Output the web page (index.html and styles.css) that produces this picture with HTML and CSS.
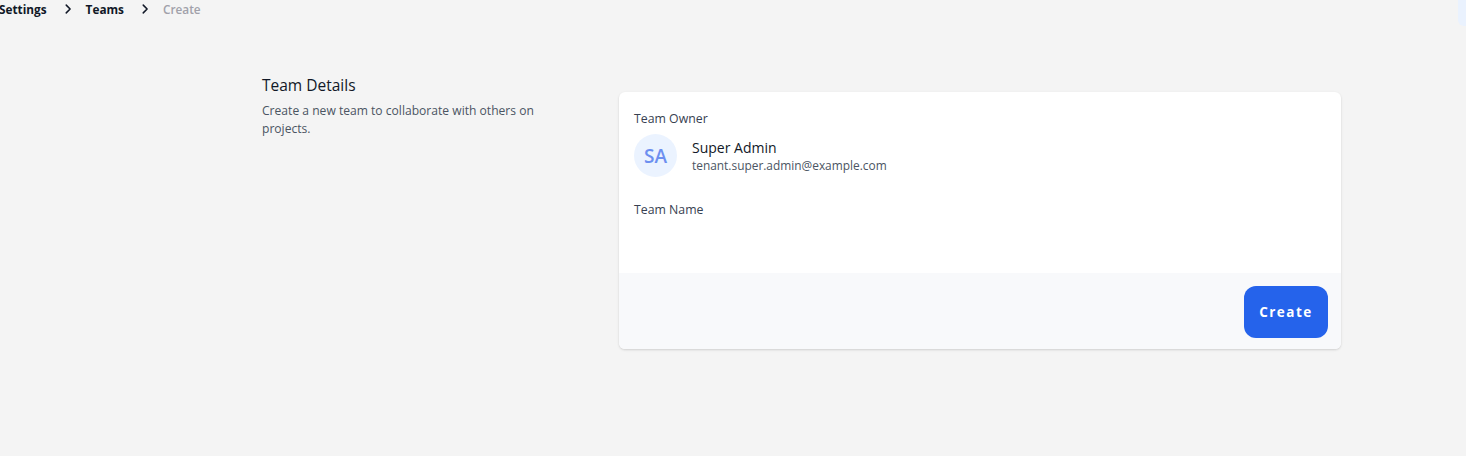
FILE: index.html
```html
<!DOCTYPE html>
<html lang="en">
<head>
<meta charset="utf-8">
<title>Create Team</title>
<link rel="stylesheet" href="styles.css">
</head>
<body>
<nav class="crumbs">
  <span class="crumb">Settings</span>
  <svg class="chev" viewBox="0 0 20 20" width="14" height="14"><path d="M7.5 4.5l5.5 5.5-5.5 5.5" fill="none" stroke="#111827" stroke-width="2.2" stroke-linecap="round" stroke-linejoin="round"/></svg>
  <span class="crumb">Teams</span>
  <svg class="chev" viewBox="0 0 20 20" width="14" height="14"><path d="M7.5 4.5l5.5 5.5-5.5 5.5" fill="none" stroke="#111827" stroke-width="2.2" stroke-linecap="round" stroke-linejoin="round"/></svg>
  <span class="crumb current">Create</span>
</nav>
<div class="corner-tab"></div>
<main class="section">
  <div class="intro">
    <h2 class="intro-title">Team Details</h2>
    <p class="intro-desc">Create a new team to collaborate with others on projects.</p>
  </div>
  <div class="card">
    <div class="card-body">
      <div class="label">Team Owner</div>
      <div class="owner">
        <div class="avatar">SA</div>
        <div class="owner-info">
          <div class="owner-name">Super Admin</div>
          <div class="owner-email">tenant.super.admin@example.com</div>
        </div>
      </div>
      <div class="label name-label">Team Name</div>
    </div>
    <div class="card-footer">
      <button class="btn">Create</button>
    </div>
  </div>
</main>
</body>
</html>
```
FILE: styles.css
```css
html, body {
  margin: 0;
  padding: 0;
}
body {
  background: #f4f4f4;
  font-family: "Open Sans", "Noto Sans", sans-serif;
  color: #1f2937;
  width: 1466px;
  height: 456px;
  overflow: hidden;
  position: relative;
}
.crumbs {
  display: flex;
  align-items: center;
  height: 18px;
  margin-left: -1px;
  font-size: 11.8px;
  font-weight: 700;
}
.crumb { color: #111827; }
.crumb.current { color: #a1a1aa; font-weight: 600; }
.chev { margin: 0 11px 0 14px; }
.corner-tab {
  position: absolute;
  top: 0;
  right: 0;
  width: 8px;
  height: 26px;
  background: #eaf2fe;
  border-bottom-left-radius: 6px;
}
.section {
  display: flex;
  margin-top: 56px;
  padding-left: 262px;
}
.intro {
  width: 290px;
  margin-right: 67px;
}
.intro-title {
  margin: 0;
  font-size: 15.5px;
  font-weight: 500;
  line-height: 22px;
  color: #111827;
}
.intro-desc {
  margin: 6px 0 0;
  font-size: 12.1px;
  line-height: 18px;
  color: #4b5563;
}
.card {
  margin-top: 18px;
  width: 722px;
  background: #fff;
  border-radius: 6px;
  box-shadow: 0 1px 3px rgba(0,0,0,0.1), 0 1px 2px rgba(0,0,0,0.06);
  overflow: hidden;
}
.card-body {
  padding: 18px 15px 55px;
}
.label {
  font-size: 12.3px;
  line-height: 17px;
  color: #374151;
}
.owner {
  display: flex;
  align-items: center;
  margin-top: 7px;
}
.avatar {
  width: 43px;
  height: 43px;
  border-radius: 50%;
  background: #ebf3ff;
  color: #6d8ff0;
  font-size: 19px;
  font-weight: 600;
  display: flex;
  align-items: center;
  justify-content: center;
  margin-right: 15px;
}
.owner-name {
  font-size: 14px;
  line-height: 19px;
  color: #111827;
}
.owner-email {
  font-size: 11.9px;
  line-height: 17px;
  color: #4b5563;
}
.name-label {
  margin-top: 24px;
}
.card-footer {
  background: #f8f9fb;
  height: 76px;
  display: flex;
  align-items: center;
  justify-content: flex-end;
  padding-right: 13px;
  padding-top: 2px;
  box-sizing: border-box;
}
.btn {
  width: 84px;
  height: 52px;
  border: none;
  border-radius: 12px;
  background: #2563eb;
  color: #fff;
  font-family: inherit;
  font-size: 13.5px;
  font-weight: 700;
  letter-spacing: 1.5px;
}
```
